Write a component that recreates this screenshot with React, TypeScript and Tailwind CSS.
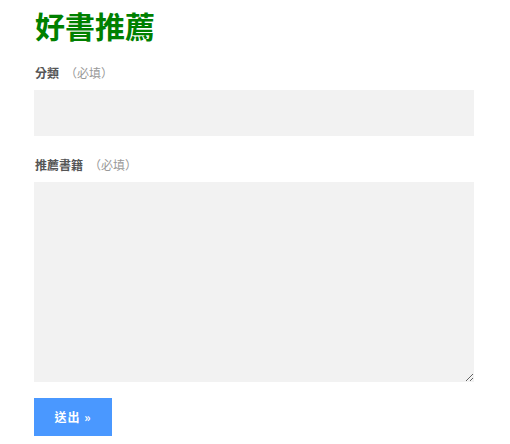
export default function App() {
  const font = { fontFamily: '"Noto Sans CJK TC", "Noto Sans", sans-serif' };
  return (
    <div className="w-[510px] h-[444px] bg-white pl-[34px] pr-[36px]" style={font}>
      <h1 className="pt-[7px] h-[50px] text-[30px] leading-[36px] font-bold text-[#008000] pl-[1px]">
        好書推薦
      </h1>
      <form className="flex flex-col" onSubmit={(e) => e.preventDefault()}>
        <label className="mt-[14px] h-[26px] pl-[1px] text-[12px] leading-[18px] text-[#555]">
          <span className="font-bold">分類</span>
          <span className="text-[#999] ml-[6px]">（必填）</span>
        </label>
        <input type="text" className="w-[440px] h-[46px] bg-[#f2f2f2] outline-none border-0 px-2" />
        <label className="mt-[20px] h-[26px] pl-[1px] text-[12px] leading-[18px] text-[#555]">
          <span className="font-bold">推薦書籍</span>
          <span className="text-[#999] ml-[6px]">（必填）</span>
        </label>
        <textarea className="block w-[440px] h-[200px] bg-[#f2f2f2] outline-none border-0 p-2 resize" />
        <div className="mt-[16px]">
          <button
            type="submit"
            className="w-[78px] h-[38px] bg-[#4a98ff] text-white text-[12px] tracking-[1px] font-bold flex items-center justify-center"
          >
            送出 »
          </button>
        </div>
      </form>
    </div>
  );
}
